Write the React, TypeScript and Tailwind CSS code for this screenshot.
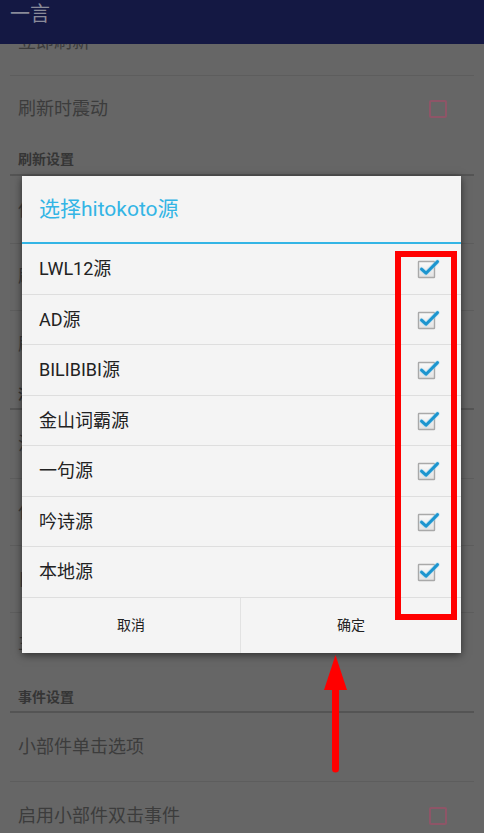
const sources = [
  { name: "LWL12源", h: "h-[51px]" },
  { name: "AD源", h: "h-[50px]" },
  { name: "BILIBIBI源", h: "h-[51px]" },
  { name: "金山词霸源", h: "h-[50px]" },
  { name: "一句源", h: "h-[51px]" },
  { name: "吟诗源", h: "h-[50px]" },
  { name: "本地源", h: "h-[51px]" },
];

function CheckedBox() {
  return (
    <svg width="24" height="22" viewBox="0 0 24 22" className="shrink-0">
      <defs>
        <linearGradient id="cbfill" x1="0" y1="0" x2="0" y2="1">
          <stop offset="0" stopColor="#fbfbfb" />
          <stop offset="1" stopColor="#e2e2e2" />
        </linearGradient>
      </defs>
      <rect x="1.5" y="3.5" width="16" height="16" fill="url(#cbfill)" stroke="#a9a9a9" strokeWidth="1.4" rx="0.5" />
      <path d="M4.5 11.2 L9 15.2 L20.5 3.6" fill="none" stroke="#9fd6f0" strokeWidth="4.6" strokeLinecap="round" strokeLinejoin="round" opacity="0.5" />
      <path d="M4.5 11.2 L9 15.2 L20.5 3.6" fill="none" stroke="#1c95cf" strokeWidth="3" strokeLinecap="round" strokeLinejoin="round" />
    </svg>
  );
}

function DimBox() {
  return <div className="w-[18px] h-[18px] border-2 border-[#8e5567] rounded-[2px]" />;
}

function Row({ h, text, box, divider = true, extra = "" }: { h: string; text: string; box?: boolean; divider?: boolean; extra?: string }) {
  return (
    <div className={`${h} mx-[10px] flex items-center justify-between pl-[8px] pr-[27px] ${divider ? "border-b border-[#5d5d5d]" : ""} ${extra}`}>
      <span className="text-[18px] leading-[24px] text-[#3c3c3c]">{text}</span>
      {box && <DimBox />}
    </div>
  );
}

function Section({ h, pb, text }: { h: string; pb: string; text: string }) {
  return (
    <div className={`${h} mx-[10px] flex items-end pl-[8px] ${pb} border-b-2 border-[#545454]`}>
      <span className="text-[14px] leading-[20px] font-bold text-[#353535]">{text}</span>
    </div>
  );
}

export default function App() {
  return (
    <div className="relative w-[484px] h-[833px] overflow-hidden bg-[#666666] font-['Roboto','Noto_Sans_CJK_SC',sans-serif]">
      {/* Action bar */}
      <header className="relative z-10 h-[44px] bg-[#141843] pl-[10px]">
        <span className="block text-[20px] leading-[28px] text-[#8a8b99]">一言</span>
      </header>

      {/* Settings list (dimmed) */}
      <div className="h-[32px] mx-[10px] overflow-hidden border-b border-[#5d5d5d] pl-[8px]">
        <div className="-mt-[14px] text-[18px] leading-[24px] text-[#3c3c3c]">立即刷新</div>
      </div>
      <Row h="h-[65px]" text="刷新时震动" box divider={false} />
      <Section h="h-[35px]" pb="pb-[5px]" text="刷新设置" />
      <Row h="h-[68px]" text="使用自定义刷新间隔" />
      <Row h="h-[67px]" text="刷新间隔" />
      <Row h="h-[67px]" text="刷新时间" divider={false} />
      <Section h="h-[32px]" pb="pb-[4px]" text="流量设置" />
      <Row h="h-[69px]" text="注意流量消耗" />
      <Row h="h-[67px]" text="仅在WiFi下刷新" />
      <Row h="h-[67px]" text="自动刷新" />
      <Row h="h-[67px]" text="主题颜色" divider={false} extra="pb-[7px]" />
      <Section h="h-[33px]" pb="pb-[4px]" text="事件设置" />
      <Row h="h-[69px]" text="小部件单击选项" />
      <Row h="h-[67px]" text="启用小部件双击事件" box divider={false} />

      {/* Dialog */}
      <div className="absolute left-[22px] top-[176px] w-[439px] h-[477px] bg-[#f4f4f4] shadow-[0_2px_8px_rgba(0,0,0,0.55)] flex flex-col">
        <div className="h-[66px] flex items-center pl-[17px]">
          <span className="text-[21px] leading-[28px] text-[#33b5e5]">选择hitokoto源</span>
        </div>
        <div className="h-[2px] bg-[#33b5e5]" />
        {sources.map((s) => (
          <div key={s.name} className={`${s.h} flex items-center justify-between pl-[17px] pr-[20px] border-b border-[#dedede]`}>
            <span className="text-[18px] leading-[24px] text-[#222222]">{s.name}</span>
            <CheckedBox />
          </div>
        ))}
        <div className="flex-1 flex">
          <div className="w-[219px] flex items-center justify-center border-r border-[#e2e2e2] text-[14px] text-[#222222]">取消</div>
          <div className="flex-1 flex items-center justify-center text-[14px] text-[#222222]">确定</div>
        </div>
      </div>

      {/* Annotation: red frame */}
      <div className="absolute left-[395px] top-[251px] w-[62px] h-[369px] border-[6px] border-[#ff0000]" />

      {/* Annotation: red arrow */}
      <svg className="absolute left-[322px] top-[654px]" width="28" height="122" viewBox="0 0 28 122">
        <path d="M13.5 1 L25 36 L2 36 Z" fill="#ff0000" />
        <line x1="13.5" y1="30" x2="13.5" y2="115" stroke="#ff0000" strokeWidth="7" strokeLinecap="round" />
      </svg>
    </div>
  );
}
